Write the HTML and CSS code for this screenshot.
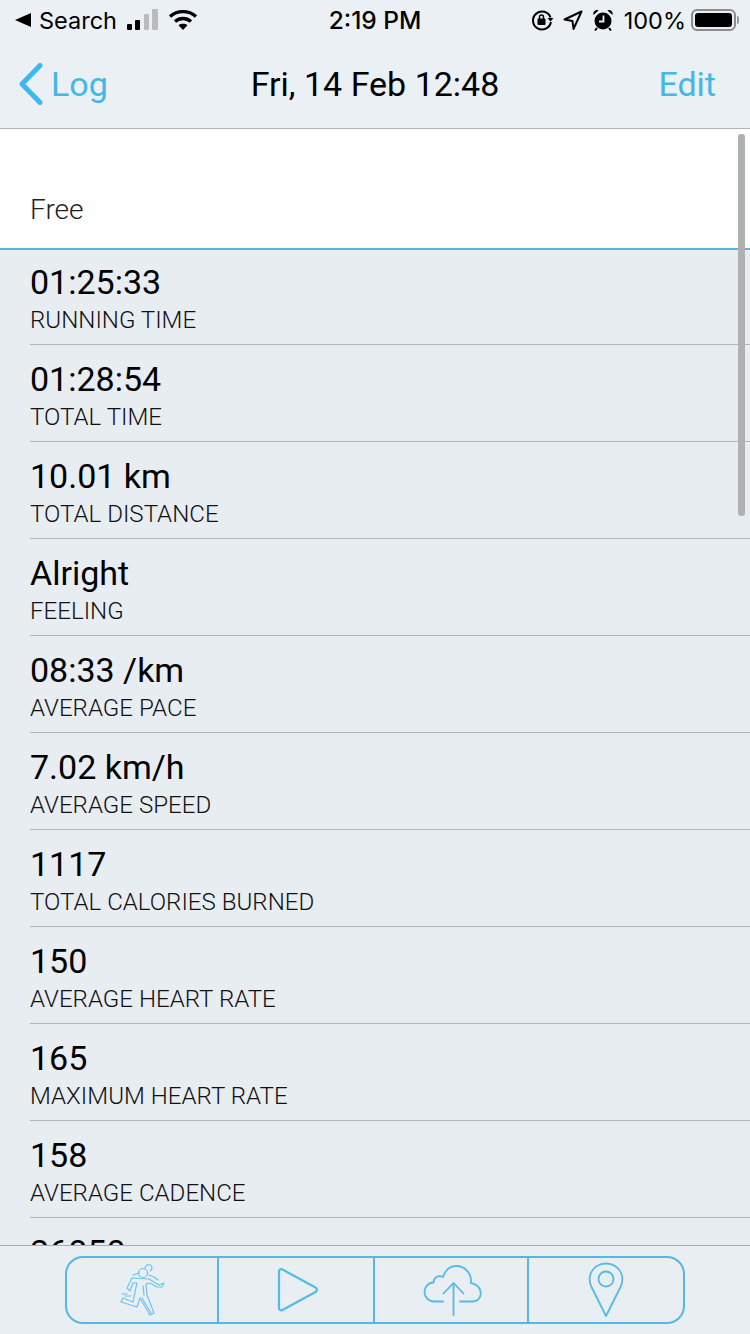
FILE: index.html
```html
<!DOCTYPE html>
<html lang="en">
<head>
  <meta charset="UTF-8">
  <meta name="viewport" content="width=device-width, initial-scale=1.0">
  <title>Fri, 14 Feb 12:48</title>
  <link rel="stylesheet" href="styles.css">
</head>
<body>
  <header class="status-bar">
    <div class="status-left">
      <svg class="back-arrow" width="16" height="14" viewBox="0 0 16 14"><path d="M16 0v14L0 7z" fill="#000"/></svg>
      <span>Search</span>
      <svg class="signal" width="32" height="24" viewBox="0 0 32 24">
        <rect x="0" y="16" width="5" height="6" rx="1" fill="#000"/>
        <rect x="8" y="12" width="5" height="10" rx="1" fill="#000"/>
        <rect x="17" y="6" width="5" height="16" rx="1" fill="#bbb"/>
        <rect x="25" y="1" width="6" height="21" rx="1" fill="#bbb"/>
      </svg>
      <svg class="wifi" width="30" height="24" viewBox="0 0 30 24" fill="none" stroke="#000" stroke-width="3.4">
        <path d="M2 8.500c7.500-6.500 18.500-6.500 26 0"/>
        <path d="M7 13.500c4.800-4 11.200-4 16 0"/>
        <path d="M15 22l-4.500-4.800c2.700-1.900 6.300-1.900 9 0z" fill="#000" stroke="none"/>
      </svg>
    </div>
    <div class="status-time">2:19 PM</div>
    <div class="status-right">
      <svg width="24" height="24" viewBox="0 0 24 24" fill="none" stroke="#000" stroke-width="2">
        <path d="M20.500 9.500a9 9 0 1 0 .4 4.500"/>
        <path d="M17.500 10h6l-3 3.500z" fill="#000" stroke="none"/>
        <rect x="7.500" y="10.500" width="8" height="6.500" rx="1" fill="#000" stroke="none"/>
        <path d="M9.500 11V9a2 2 0 0 1 4 0v2" stroke-width="1.500"/>
      </svg>
      <svg width="22" height="24" viewBox="0 0 22 24" fill="none" stroke="#000" stroke-width="2"><path d="M19.500 3.500L2.500 11.500l8 1.500 1 8z" stroke-linejoin="round"/></svg>
      <svg width="22" height="24" viewBox="0 0 22 24">
        <circle cx="11" cy="13" r="8.500" fill="#000"/>
        <path d="M1.500 7c-1-3 2-6 5-4.500zM20.500 7c1-3-2-6-5-4.500z" fill="#000"/>
        <path d="M5 20l-2 2.500M17 20l2 2.500" stroke="#000" stroke-width="2"/>
        <path d="M11.500 7.500v6H7" stroke="#e9eef2" stroke-width="1.800" fill="none"/>
      </svg>
      <span>100%</span>
      <div class="battery"><div class="battery-fill"></div></div>
      <div class="battery-cap"></div>
    </div>
  </header>

  <nav class="nav-bar">
    <div class="nav-back">
      <svg width="28" height="44" viewBox="0 0 28 44" fill="none" stroke="#3db8ee" stroke-width="5" stroke-linecap="round" stroke-linejoin="round"><path d="M23 3.500L5 22l18 18.500"/></svg>
      <span>Log</span>
    </div>
    <div class="nav-title">Fri, 14 Feb 12:48</div>
    <div class="nav-edit">Edit</div>
  </nav>

  <main class="content">
    <div class="scroll-thumb"></div>
    <section class="type-card">Free</section>
    <div class="stat-row">
      <div class="stat-value">01:25:33</div>
      <div class="stat-label">RUNNING TIME</div>
    </div>
    <div class="stat-row">
      <div class="stat-value">01:28:54</div>
      <div class="stat-label">TOTAL TIME</div>
    </div>
    <div class="stat-row">
      <div class="stat-value">10.01 km</div>
      <div class="stat-label">TOTAL DISTANCE</div>
    </div>
    <div class="stat-row">
      <div class="stat-value">Alright</div>
      <div class="stat-label">FEELING</div>
    </div>
    <div class="stat-row">
      <div class="stat-value">08:33 /km</div>
      <div class="stat-label">AVERAGE PACE</div>
    </div>
    <div class="stat-row">
      <div class="stat-value">7.02 km/h</div>
      <div class="stat-label">AVERAGE SPEED</div>
    </div>
    <div class="stat-row">
      <div class="stat-value">1117</div>
      <div class="stat-label">TOTAL CALORIES BURNED</div>
    </div>
    <div class="stat-row">
      <div class="stat-value">150</div>
      <div class="stat-label">AVERAGE HEART RATE</div>
    </div>
    <div class="stat-row">
      <div class="stat-value">165</div>
      <div class="stat-label">MAXIMUM HEART RATE</div>
    </div>
    <div class="stat-row">
      <div class="stat-value">158</div>
      <div class="stat-label">AVERAGE CADENCE</div>
    </div>
    <div class="stat-row">
      <div class="stat-value">26850</div>
    </div>
  </main>

  <footer class="tab-bar">
    <div class="tabs">
      <div class="tab tab-run">
        <svg width="48" height="56" viewBox="0 0 48 56" fill="none" stroke="#6cc4ea" stroke-width="1.200" stroke-linejoin="round" stroke-linecap="round">
          <circle cx="25" cy="11" r="4.500"/>
          <path d="M27 6c.5-2.500 3-4 5-3.200 2.500 1 2.500 4 .5 6"/>
          <path d="M14 16l17 1 10 6 5-2-2 4h-5l-7-4-4 1 1 11 7 18-4 2-10-17-3 9-16-5 2-4 10 4 2-10 2-9h-4l-3 8-3-3z"/>
          <path d="M15 13l6-2M31 13l5 2 4 3M7 34h6M4 32h5M24 36l9 15M25 24l1 9"/>
        </svg>
      </div>
      <div class="tab tab-play">
        <svg class="play-icon" width="42" height="48" viewBox="0 0 42 48" fill="none" stroke="#55bbe6" stroke-width="2.200" stroke-linejoin="round"><path d="M2 5.500c0-2 1.800-3 3.500-2l33 18c1.800 1 1.800 3.500 0 4.500l-33 18c-1.700 1-3.500 0-3.500-2z"/></svg>
      </div>
      <div class="tab tab-cloud">
        <svg class="cloud-icon" width="60" height="54" viewBox="0 0 60 54" fill="none" stroke="#55bbe6" stroke-width="1.800" stroke-linecap="round" stroke-linejoin="round">
          <path d="M20 38.500H11C5 38.500 1.500 33.500 1.500 29c0-5 4-9.500 9-9.500 0-5 5-8 9.500-5.500C22 7.500 27 3 33.500 3c8 0 14.500 6.500 14.500 15 0 .8 0 1.500-.2 2 5.500.7 10 4.800 10 10.500 0 4.500-3.500 8-8 8H37"/>
          <path d="M30.500 52V20M20.500 30.500l10-10.500 10 10.500"/>
        </svg>
      </div>
      <div class="tab tab-pin">
        <svg width="36" height="56" viewBox="0 0 36 56" fill="none" stroke="#55bbe6" stroke-width="1.800" stroke-linejoin="round">
          <path d="M18 54L3.500 25C1 20 1.500 15 2.500 12 5 5.500 11 1.500 18 1.500S31 5.500 33.500 12c1 3 1.500 8-1 13z"/>
          <circle cx="18" cy="17" r="7.500"/>
        </svg>
      </div>
    </div>
  </footer>
</body>
</html>
```

FILE: styles.css
```css
* {
  box-sizing: border-box;
}
body {
  margin: 0;
  width: 750px;
  height: 1334px;
  overflow: hidden;
  display: flex;
  flex-direction: column;
  background-color: #e8edf1;
  color: #000;
  font-family: Roboto, sans-serif;
}
.status-bar {
  height: 40px;
  padding: 0 11px 0 15px;
  display: flex;
  align-items: center;
  justify-content: space-between;
  position: relative;
  background-color: #ebf0f4;
  font-family: Inter, sans-serif;
  font-size: 23.5px;
}
.status-left {
  display: flex;
  align-items: center;
  gap: 8px;
}
.status-left .signal {
  margin-left: 2px;
}
.status-left .wifi {
  margin-left: 1px;
}
.status-time {
  position: absolute;
  left: 0;
  right: 0;
  text-align: center;
  font-size: 24.5px;
  font-weight: 500;
  pointer-events: none;
}
.status-right {
  display: flex;
  align-items: center;
  gap: 8px;
}
.status-right span {
  margin: 0 -3px 0 2px;
}
.battery {
  width: 45px;
  height: 22px;
  padding: 2px;
  border: 2px solid #8c8c8c;
  border-radius: 6px;
}
.battery-fill {
  height: 100%;
  background-color: #000;
  border-radius: 3px;
}
.battery-cap {
  width: 2px;
  height: 8px;
  margin-left: -7px;
  background-color: #9a9a9a;
  border-radius: 0 2px 2px 0;
}
.nav-bar {
  height: 89px;
  padding: 0 34px 0 17px;
  display: flex;
  align-items: center;
  justify-content: space-between;
  position: relative;
  background-color: #ebf0f4;
  border-bottom: 1px solid #b2b4b6;
  color: #45b6e8;
  font-size: 34px;
}
.nav-back {
  display: flex;
  align-items: center;
  gap: 6px;
}
.nav-title {
  position: absolute;
  left: 0;
  right: 0;
  text-align: center;
  color: #000;
  pointer-events: none;
}
.content {
  flex: 1;
  min-height: 0;
  overflow: hidden;
  position: relative;
  background-color: #e8edf1;
}
.scroll-thumb {
  position: absolute;
  top: 5px;
  right: 5px;
  width: 7px;
  height: 382px;
  border-radius: 3px;
  background-color: #aeb0b1;
}
.type-card {
  height: 121px;
  padding: 65px 30px 0;
  background-color: #fff;
  border-bottom: 2px solid #5cb6dc;
  font-size: 28px;
  font-weight: 300;
  line-height: 32px;
  color: #222;
}
.stat-row {
  height: 97px;
  margin-left: 30px;
  padding-top: 13px;
  border-bottom: 1px solid #b2b4b6;
}
.type-card + .stat-row {
  height: 95px;
  padding-top: 11px;
}
.stat-value {
  font-size: 34px;
  line-height: 42px;
}
.stat-label {
  margin-top: 2px;
  font-size: 24.1px;
  font-weight: 300;
  line-height: 30px;
  color: #111;
}
.tab-bar {
  height: 89px;
  padding: 10px 65px 9px;
  background-color: #e9eef2;
  border-top: 1px solid #a9abad;
}
.tabs {
  height: 68px;
  display: flex;
  border: 2px solid #55b8e2;
  border-radius: 18px;
}
.tab {
  display: flex;
  align-items: center;
  justify-content: center;
  border-right: 2px solid #55b8e2;
}
.tab-run {
  width: 152px;
}
.tab-play {
  width: 156px;
}
.play-icon {
  margin-left: 3px;
}
.tab-cloud {
  width: 154px;
}
.cloud-icon {
  margin-left: 3px;
}
.tab-pin {
  flex: 1;
  border-right: none;
}
```
